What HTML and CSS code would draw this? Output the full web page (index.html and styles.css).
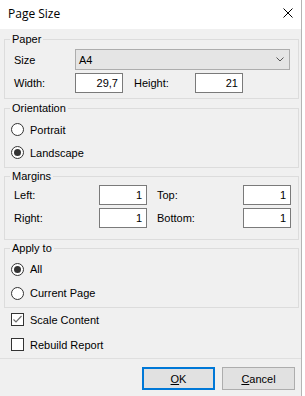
FILE: index.html
```html
<!DOCTYPE html>
<html>
<head>
<meta charset="utf-8">
<link rel="stylesheet" href="styles.css">
</head>
<body>
<div class="dialog">
  <div class="titlebar">
    <span class="title">Page Size</span>
    <svg class="close" width="10" height="10" viewBox="0 0 10 10"><path d="M0.5 0.5 L9.5 9.5 M9.5 0.5 L0.5 9.5" stroke="#000" stroke-width="1" fill="none"/></svg>
  </div>
  <div class="content">
    <fieldset class="group">
      <legend>Paper</legend>
      <div class="paper">
        <div class="row row-combo">
          <span class="lbl lbl-paper">Size</span>
          <div class="combo"><span>A4</span>
            <svg class="chev" width="8" height="5" viewBox="0 0 8 5"><path d="M0.5 0.5 L4 4 L7.5 0.5" stroke="#555" stroke-width="1" fill="none"/></svg>
          </div>
        </div>
        <div class="row">
          <span class="lbl lbl-paper">Width:</span>
          <div class="input">29,7</div>
          <span class="lbl lbl-paper lbl-gap">Height:</span>
          <div class="input">21</div>
        </div>
      </div>
    </fieldset>

    <fieldset class="group group-orient">
      <legend>Orientation</legend>
      <div class="options options-orient">
        <label class="opt"><span class="radio"></span>Portrait</label>
        <label class="opt"><span class="radio checked"></span>Landscape</label>
      </div>
    </fieldset>

    <fieldset class="group group-margins">
      <legend>Margins</legend>
      <div class="margins">
        <div class="row">
          <span class="lbl lbl-m1">Left:</span>
          <div class="input">1</div>
          <span class="lbl lbl-m2">Top:</span>
          <div class="input">1</div>
        </div>
        <div class="row">
          <span class="lbl lbl-m1">Right:</span>
          <div class="input">1</div>
          <span class="lbl lbl-m2">Bottom:</span>
          <div class="input">1</div>
        </div>
      </div>
    </fieldset>

    <fieldset class="group group-apply">
      <legend>Apply to</legend>
      <div class="options options-apply">
        <label class="opt opt-apply"><span class="radio checked"></span>All</label>
        <label class="opt opt-apply"><span class="radio"></span>Current Page</label>
      </div>
    </fieldset>

    <div class="checks">
      <label class="opt"><span class="check"><svg width="11" height="11" viewBox="0 0 11 11"><path d="M1.5 5.5 L4 8 L9.5 2" stroke="#6d6d6d" stroke-width="1.2" fill="none"/></svg></span>Scale Content</label>
      <label class="opt"><span class="check"></span>Rebuild Report</label>
    </div>
  </div>
  <div class="footer">
    <button class="btn btn-default"><u>O</u>K</button>
    <button class="btn"><u>C</u>ancel</button>
  </div>
</div>
</body>
</html>
```
FILE: styles.css
```css
html, body {
  margin: 0;
  padding: 0;
  background: #ffffff;
}
body {
  font-family: "Liberation Sans", Arial, sans-serif;
  font-size: 11px;
  color: #000;
}
.dialog {
  width: 301px;
  height: 396px;
  border-right: 1px solid #b4b4b4;
  background: #f0f0f0;
  display: flex;
  flex-direction: column;
}
.titlebar {
  height: 29px;
  background: #fff;
  display: flex;
  align-items: center;
  justify-content: space-between;
  padding: 0 8px;
}
.title {
  font-family: "Open Sans", "Noto Sans", sans-serif;
  font-size: 12px;
  line-height: 16px;
  margin-top: -2px;
}
.close {
  display: block;
  margin-top: -3px;
}
.content {
  flex: 1;
  display: flex;
  flex-direction: column;
  padding-top: 4px;
}
.group {
  margin: 0 0 0 4px;
  width: 295px;
  box-sizing: border-box;
  border: 1px solid #dcdcdc;
  padding: 0;
  min-width: 0;
}
.group legend {
  font-size: 11px;
  line-height: 13px;
  padding: 0 2px;
  margin-left: 5px;
}
.group-orient { margin-top: 3px; }
.group-margins { margin-top: 2px; }
.group-apply { margin-top: 2px; }

.row {
  display: flex;
  align-items: center;
}
.paper {
  padding: 3px 0 5px 9px;
  display: flex;
  flex-direction: column;
  gap: 3px;
}
.row-combo { height: 21px; }
.lbl { display: block; }
.lbl-paper { width: 61px; }
.lbl-gap { margin-left: 11px; }
.combo {
  width: 215px;
  height: 21px;
  box-sizing: border-box;
  border: 1px solid #adadad;
  background: #e5e5e5;
  display: flex;
  align-items: center;
  justify-content: space-between;
  padding: 0 5px 0 3px;
}
.chev { display: block; }
.input {
  width: 48px;
  height: 20px;
  box-sizing: border-box;
  border: 1px solid #7a7a7a;
  background: #fff;
  text-align: right;
  padding-right: 4px;
  line-height: 18px;
}

.options {
  display: flex;
  flex-direction: column;
  padding-left: 6px;
}
.options-orient { padding-top: 3px; padding-bottom: 3px; }
.options-apply { padding-top: 2px; padding-bottom: 2px; }
.opt {
  display: flex;
  align-items: center;
  gap: 6px;
  height: 23px;
}
.opt-apply { height: 24px; }
.radio {
  width: 13px;
  height: 13px;
  box-sizing: border-box;
  border: 1px solid #333;
  border-radius: 50%;
  background: #fff;
  display: flex;
  align-items: center;
  justify-content: center;
  flex: none;
}
.radio.checked::after {
  content: "";
  width: 7px;
  height: 7px;
  border-radius: 50%;
  background: #333;
}

.margins {
  padding: 2px 0 11px 9px;
  display: flex;
  flex-direction: column;
  gap: 3px;
}
.margins .row { height: 20px; }
.lbl-m1 { width: 85px; }
.lbl-m2 { width: 86px; margin-left: 10px; }

.checks {
  display: flex;
  flex-direction: column;
  gap: 2px;
  padding-left: 11px;
}
.check {
  width: 13px;
  height: 13px;
  box-sizing: border-box;
  border: 1px solid #333;
  background: #fff;
  flex: none;
  display: flex;
  align-items: center;
  justify-content: center;
}
.check svg { display: block; }

.footer {
  height: 38px;
  border-top: 1px solid #dfdfdf;
  display: flex;
  justify-content: flex-end;
  align-items: flex-start;
  gap: 7px;
  padding: 8px 6px 0 0;
  box-sizing: border-box;
}
.btn {
  width: 73px;
  height: 23px;
  box-sizing: border-box;
  border: 1px solid #adadad;
  background: #e1e1e1;
  font-family: "Liberation Sans", Arial, sans-serif;
  font-size: 11px;
  color: #000;
  padding: 0;
  margin: 0;
}
.btn-default {
  border: 2px solid #0078d7;
}
```
